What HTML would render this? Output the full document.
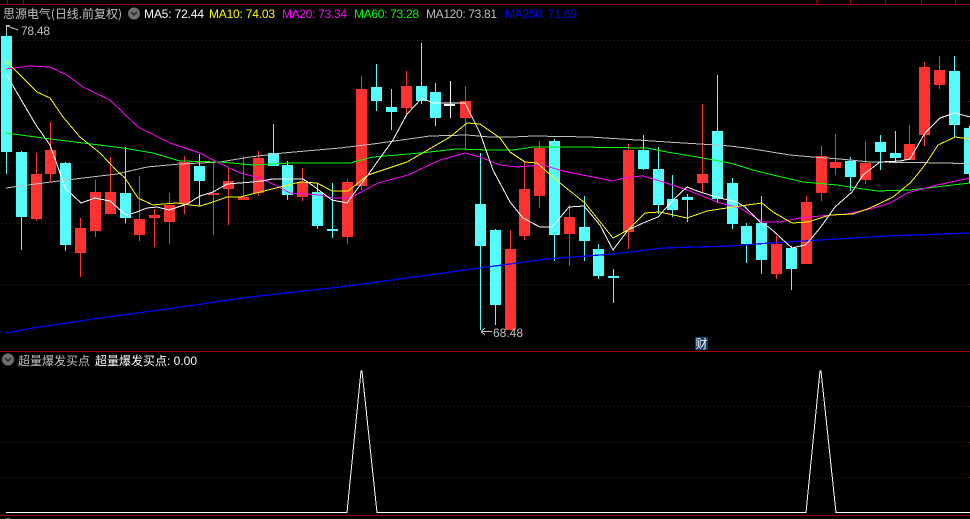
<!DOCTYPE html>
<html><head><meta charset="utf-8"><style>
html,body{margin:0;padding:0;background:#000;width:970px;height:519px;overflow:hidden}
svg{display:block}
text{font-family:"Liberation Sans","WenQuanYi Zen Hei",sans-serif;font-size:12px}
.c{font-family:"WenQuanYi Zen Hei","Noto Sans CJK SC",sans-serif}
</style></head><body>
<svg width="970" height="519" viewBox="0 0 970 519" xmlns="http://www.w3.org/2000/svg">
<rect width="970" height="519" fill="#000"/>
<g shape-rendering="crispEdges">
<path fill="#a00000" d="M0 4h970v1H0zM7 0h1v4H7zM23 0h1v4h-1zM816 0h1v4h-1zM850 0h1v4h-1zM885 0h1v4h-1zM921 0h1v4h-1zM955 0h1v4h-1zM0 351h970v1H0zM0 515h970v1H0z"/>
<g stroke="#a00000" stroke-width="1" stroke-dasharray="1 3" fill="none">
<path d="M1 40.5H970M1 101.5H970M1 162.5H970M1 223.5H970M1 284.5H970M1 406.5H970M1 442.5H970M1 477.5H970"/>
</g>
<path fill="#ff3232" d="M36 153h1v68h-1zM31 174h11v45h-11z
M50 122h1v60h-1zM45 150h11v24h-11z
M80 218h1v59h-1zM75 228h11v25h-11z
M95 180h1v57h-1zM90 192h11v39h-11z
M110 157h1v57h-1zM105 192h11v22h-11z
M139 176h1v65h-1zM134 219h11v16h-11z
M154 209h1v38h-1zM149 215h11v3h-11z
M169 193h1v51h-1zM164 205h11v17h-11z
M184 156h1v58h-1zM179 162h11v42h-11z
M213 162h1v73h-1zM208 193h11v2h-11z
M228 167h1v58h-1zM223 181h11v8h-11z
M243 156h1v44h-1zM238 197h11v3h-11z
M258 151h1v45h-1zM253 158h11v35h-11z
M302 168h1v33h-1zM297 182h11v15h-11z
M347 179h1v65h-1zM342 182h11v55h-11z
M361 76h1v114h-1zM356 89h11v97h-11z
M406 71h1v44h-1zM401 86h11v22h-11z
M465 86h1v63h-1zM460 101h11v17h-11z
M510 230h1v100h-1zM505 249h11v81h-11z
M524 161h1v79h-1zM519 189h11v47h-11z
M539 141h1v67h-1zM534 148h11v48h-11z
M569 205h1v61h-1zM564 217h11v17h-11z
M628 144h1v105h-1zM623 150h11v82h-11z
M702 104h1v88h-1zM697 174h11v9h-11z
M776 236h1v43h-1zM771 244h11v30h-11z
M806 196h1v68h-1zM801 202h11v62h-11z
M821 146h1v55h-1zM816 156h11v37h-11z
M835 134h1v41h-1zM830 162h11v6h-11z
M865 141h1v43h-1zM860 163h11v17h-11z
M909 125h1v35h-1zM904 144h11v16h-11z
M924 62h1v84h-1zM919 67h11v68h-11z
M939 56h1v33h-1zM934 70h11v15h-11z"/>
<path fill="#54fcfc" d="M6 25h1v149H6zM1 36h11v116H1z
M21 151h1v99h-1zM16 152h11v65H16z
M65 162h1v89h-1zM60 163h11v82H60z
M125 147h1v76h-1zM120 193h11v25h-11z
M199 154h1v52h-1zM194 166h11v15h-11z
M273 124h1v42h-1zM268 153h11v13h-11z
M287 161h1v39h-1zM282 165h11v30h-11z
M317 183h1v46h-1zM312 192h11v34h-11z
M332 183h1v55h-1zM327 229h11v2h-11z
M376 64h1v47h-1zM371 87h11v14h-11z
M391 89h1v41h-1zM386 107h11v5h-11z
M421 43h1v61h-1zM416 86h11v15h-11z
M435 83h1v43h-1zM430 92h11v26h-11z
M480 153h1v177h-1zM475 204h11v42h-11z
M495 229h1v96h-1zM490 230h11v75h-11z
M554 139h1v122h-1zM549 141h11v94h-11z
M584 196h1v65h-1zM579 227h11v14h-11z
M598 244h1v35h-1zM593 249h11v27h-11z
M613 269h1v34h-1zM608 276h11v2h-11z
M643 135h1v35h-1zM638 150h11v19h-11z
M658 147h1v67h-1zM653 169h11v36h-11z
M672 175h1v42h-1zM667 199h11v11h-11z
M687 194h1v28h-1zM682 197h11v3h-11z
M717 75h1v128h-1zM712 131h11v68h-11z
M732 178h1v51h-1zM727 183h11v41h-11z
M746 223h1v40h-1zM741 226h11v18h-11z
M761 196h1v78h-1zM756 223h11v37h-11z
M791 246h1v44h-1zM786 248h11v21h-11z
M850 157h1v34h-1zM845 161h11v16h-11z
M880 135h1v35h-1zM875 142h11v10h-11z
M895 131h1v31h-1zM890 153h11v5h-11z
M954 56h1v81h-1zM949 71h11v54h-11z
M969 126h1v57h-1zM964 128h6v46h-6z"/>
<path fill="#fff" d="M450 81h1v37h-1zM444 104h11v2h-11z"/>
<g fill="none" stroke-width="1">
<polyline stroke="#0000ff" stroke-width="1.25" points="6,333 33,328 100,318 167,309 250,297 340,287 407,278 480,268 547,259 613,254 663,248 730,246 770,243 820,240 887,236 970,233"/>
<polyline stroke="#c0c0c0" points="6,188 43,183 83,178 117,174 147,167 180,164 220,162 250,157 283,153 340,148 373,144 430,136 467,135 490,137 513,137 533,136 590,137 637,140 667,142 700,144 730,146 753,149 790,155 813,157 840,159 870,162 947,163 970,164"/>
<polyline stroke="#00ff00" points="6,133 43,138 83,143 123,148 153,153 180,161 220,162 253,165 290,163 350,163 373,157 420,153 457,149 490,150 513,150 533,147 577,147 647,148 667,152 697,157 730,163 753,170 773,175 803,182 837,185 877,191 910,190 970,183"/>
<polyline stroke="#ff00ff" points="6,69 30,66 50,67 67,75 83,87 110,100 138,127 170,143 200,153 217,162 240,173 260,178 277,186 290,193 320,195 333,198 350,198 378,183 408,175 440,160 465,153 480,157 500,165 517,167 543,165 563,171 603,179 613,181 627,177 643,176 663,182 687,190 720,203 740,208 763,222 780,222 800,218 820,216 847,214 870,209 890,203 907,193 937,185 970,178"/>
<polyline stroke="#ffff00" points="6,61 28,83 37,92 50,98 63,117 80,137 100,153 116,170 125,178 138,198 153,205 163,204 177,203 190,205 200,206 210,203 227,197 240,197 260,192 280,187 300,182 317,183 332,191 348,191 362,180 368,175 407,162 450,137 467,123 480,124 500,138 510,152 525,162 537,163 545,170 560,183 585,203 613,238 628,230 645,213 660,212 687,218 707,211 720,209 740,206 762,203 773,212 792,223 808,222 830,215 853,214 870,208 893,197 910,183 917,175 927,162 938,145 955,137 970,139"/>
<polyline stroke="#ffffff" points="6,74 36,125 50,145 59,170 65,188 81,203 95,198 110,201 126,215 134,213 147,208 157,207 169,210 187,204 200,196 213,192 227,184 240,183 252,182 262,181 272,179 303,179 312,185 332,200 347,203 355,192 368,175 380,158 393,140 407,114 422,98 433,103 465,103 480,133 493,170 510,202 523,218 540,227 552,227 569,207 584,206 600,225 613,250 628,230 643,223 658,217 673,200 687,187 700,192 720,198 737,202 745,207 760,222 770,228 792,248 805,245 810,240 820,228 835,207 852,192 863,175 880,162 900,161 910,159 925,133 940,118 955,113 970,117"/>
<polyline stroke="#ffffff" points="6,512.5 347,512.5 361,371 362,371 377,512.5 806,512.5 820,371 821,371 836,512.5 970,512.5"/>
<path stroke="#c0c0c0" d="M6.5 34V25.5H10M7 26L18 30M481 331.5H492M481 331.5L485 328M481 331.5L485 335"/>
</g>
<rect x="695" y="337" width="13" height="13" fill="#0e3a68"/>
</g>
<circle cx="134" cy="13.5" r="6" fill="#707070"/>
<path d="M131 12l3 3 3-3" fill="none" stroke="#222" stroke-width="1.4"/>
<circle cx="8" cy="359.5" r="6" fill="#707070"/>
<path d="M5 358l3 3 3-3" fill="none" stroke="#222" stroke-width="1.4"/>
<circle cx="8" cy="524" r="6" fill="#707070"/>
<text class="c" x="3" y="18" fill="#c0c0c0" font-size="13" textLength="119">思源电气(日线.前复权)</text>
<text x="144" y="18" fill="#ffffff" textLength="60">MA5: 72.44</text>
<text x="209" y="18" fill="#ffff00" textLength="66">MA10: 74.03</text>
<text x="282" y="18" fill="#ff00ff" textLength="65">MA20: 73.34</text>
<text x="354" y="18" fill="#00ff00" textLength="65">MA60: 73.28</text>
<text x="426" y="18" fill="#c0c0c0" textLength="71">MA120: 73.81</text>
<text x="505" y="18" fill="#0000ff" textLength="72">MA250: 71.69</text>
<text x="21" y="35" fill="#c0c0c0" textLength="29">78.48</text>
<text x="493" y="337" fill="#c0c0c0" textLength="30">68.48</text>
<text class="c" x="695.5" y="348" fill="#ffffff">财</text>
<text class="c" x="18" y="365" fill="#c0c0c0" textLength="72">超量爆发买点</text>
<text class="c" x="95" y="365" fill="#ffffff" textLength="72">超量爆发买点</text>
<text x="167" y="365" fill="#ffffff" textLength="30">: 0.00</text>
</svg>
</body></html>
